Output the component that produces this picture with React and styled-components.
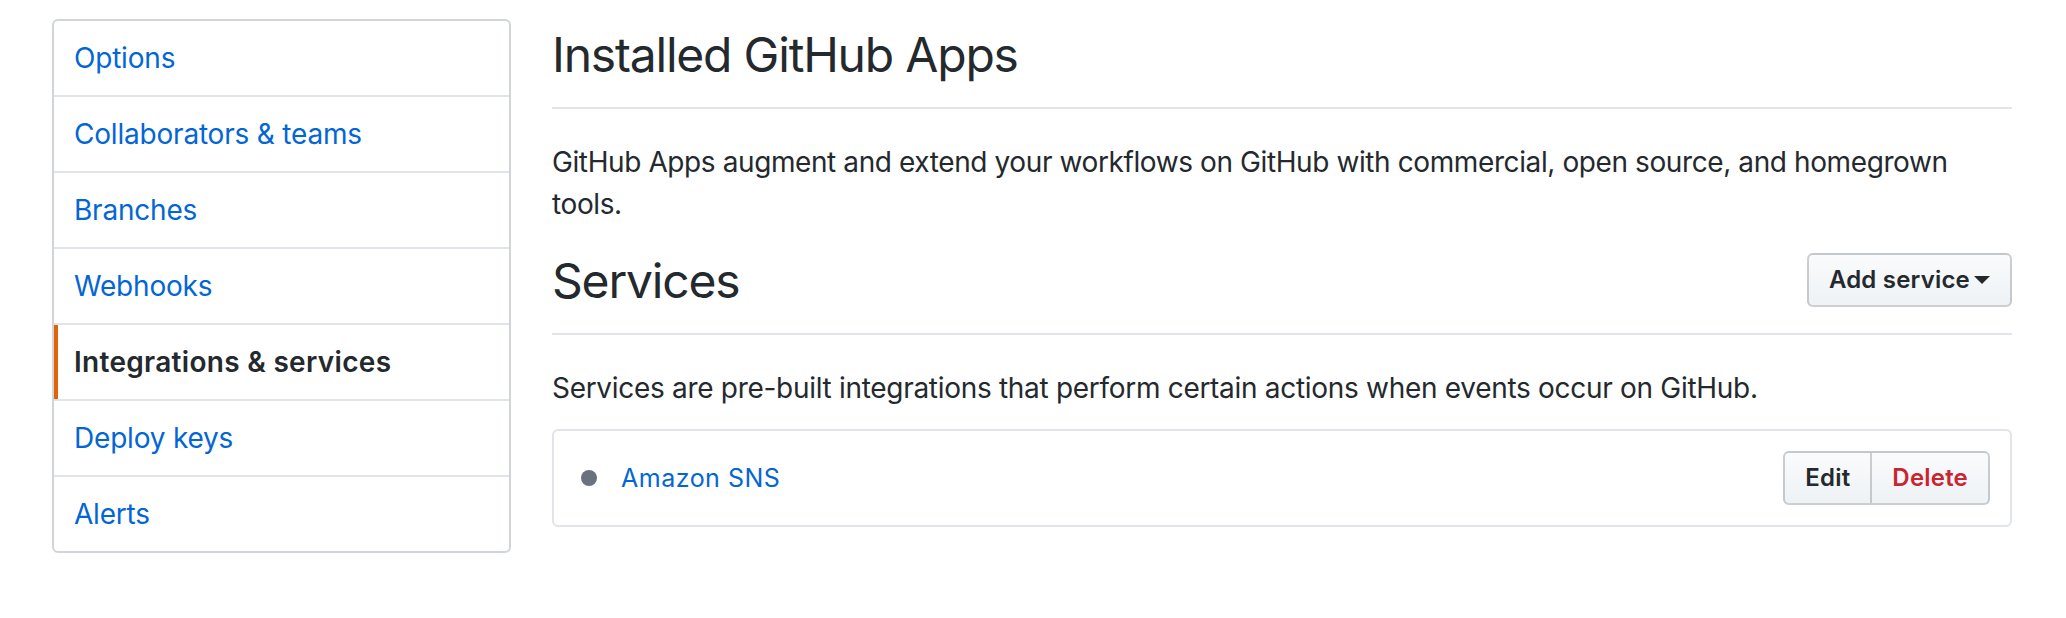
import React from "react";
import styled, { createGlobalStyle, css } from "styled-components";

const GlobalStyle = createGlobalStyle`
  html, body {
    margin: 0;
    padding: 0;
    background: #ffffff;
  }
  body {
    font-family: Inter, "Noto Sans", "Liberation Sans", sans-serif;
    color: #24292e;
  }
  * { box-sizing: border-box; }
`;

const Layout = styled.div`
  display: flex;
  align-items: flex-start;
  gap: 41px;
  padding: 19px 54px 0 52px;
`;

const Sidebar = styled.nav`
  flex: none;
  width: 459px;
  border: 2px solid #d1d5da;
  border-radius: 6px;
  overflow: hidden;
`;

const MenuItem = styled.a`
  display: block;
  padding: 16px 20px;
  font-size: 28px;
  line-height: 42px;
  letter-spacing: -0.2px;
  color: #0366d6;
  text-decoration: none;
  border-bottom: 2px solid #e1e4e8;
  &:last-child { border-bottom: none; }
  ${(p) =>
    p.$selected &&
    css`
      color: #24292e;
      font-weight: 600;
      letter-spacing: 0.3px;
      box-shadow: inset 4px 0 0 #e36209;
    `}
`;

const Main = styled.main`
  flex: 1;
  min-width: 0;
`;

const Subhead = styled.div`
  display: flex;
  align-items: flex-start;
  padding-bottom: 16px;
  margin-bottom: 32px;
  border-bottom: 2px solid #e1e4e8;
`;

const SubheadHeading = styled.h2`
  flex: 1;
  margin: 0;
  font-size: 48px;
  font-weight: 400;
  line-height: 72px;
  letter-spacing: -1.2px;
  color: #24292e;
`;

const SubheadActions = styled.div`
  margin: 8px 0 8px 8px;
`;

const Text = styled.p`
  margin: 0 0 20px;
  font-size: 28px;
  line-height: 42px;
  letter-spacing: ${(p) => p.$tracking || "-0.4px"};
`;

const Button = styled.button`
  display: inline-flex;
  align-items: center;
  font-family: inherit;
  font-size: 24px;
  font-weight: 600;
  line-height: 40px;
  letter-spacing: 0.2px;
  padding: 5px 20px;
  color: ${(p) => (p.$danger ? "#cb2431" : "#24292e")};
  background: linear-gradient(-180deg, #fafbfc 0%, #eff3f6 90%);
  border: 2px solid rgba(27, 31, 35, 0.2);
  border-radius: 6px;
  cursor: pointer;
  white-space: nowrap;
`;

const BtnGroup = styled.div`
  display: inline-flex;
  & > ${Button} {
    border-radius: 0;
  }
  & > ${Button}:first-child {
    border-radius: 6px 0 0 6px;
    margin-right: -2px;
  }
  & > ${Button}:last-child {
    border-radius: 0 6px 6px 0;
  }
`;

const Caret = styled.span`
  display: inline-block;
  width: 0;
  height: 0;
  margin-left: 4px;
  border-style: solid;
  border-width: 8px 8px 0;
  border-color: #24292e transparent transparent;
`;

const ServiceBox = styled.div`
  display: flex;
  align-items: center;
  justify-content: space-between;
  padding: 20px;
  border: 2px solid #e1e4e8;
  border-radius: 6px;
`;

const ServiceName = styled.div`
  display: flex;
  align-items: center;
`;

const Dot = styled.span`
  width: 16px;
  height: 16px;
  border-radius: 50%;
  background: #6a737d;
  margin: 0 24px 0 7px;
`;

const ServiceLink = styled.a`
  font-size: 25px;
  line-height: 36px;
  letter-spacing: 0.5px;
  color: #0366d6;
  text-decoration: none;
`;

const menu = [
  "Options",
  "Collaborators & teams",
  "Branches",
  "Webhooks",
  "Integrations & services",
  "Deploy keys",
  "Alerts",
];

export default function App() {
  return (
    <>
      <GlobalStyle />
      <Layout>
        <Sidebar>
          {menu.map((m) => (
            <MenuItem key={m} href="#" $selected={m === "Integrations & services"}>
              {m}
            </MenuItem>
          ))}
        </Sidebar>
        <Main>
          <Subhead>
            <SubheadHeading>Installed GitHub Apps</SubheadHeading>
          </Subhead>
          <Text>
            GitHub Apps augment and extend your workflows on GitHub with commercial, open source, and homegrown tools.
          </Text>
          <Subhead>
            <SubheadHeading>Services</SubheadHeading>
            <SubheadActions>
              <Button>
                Add service
                <Caret />
              </Button>
            </SubheadActions>
          </Subhead>
          <Text $tracking="-0.3px">
            Services are pre-built integrations that perform certain actions when events occur on GitHub.
          </Text>
          <ServiceBox>
            <ServiceName>
              <Dot />
              <ServiceLink href="#">Amazon SNS</ServiceLink>
            </ServiceName>
            <BtnGroup>
              <Button>Edit</Button>
              <Button $danger>Delete</Button>
            </BtnGroup>
          </ServiceBox>
        </Main>
      </Layout>
    </>
  );
}
